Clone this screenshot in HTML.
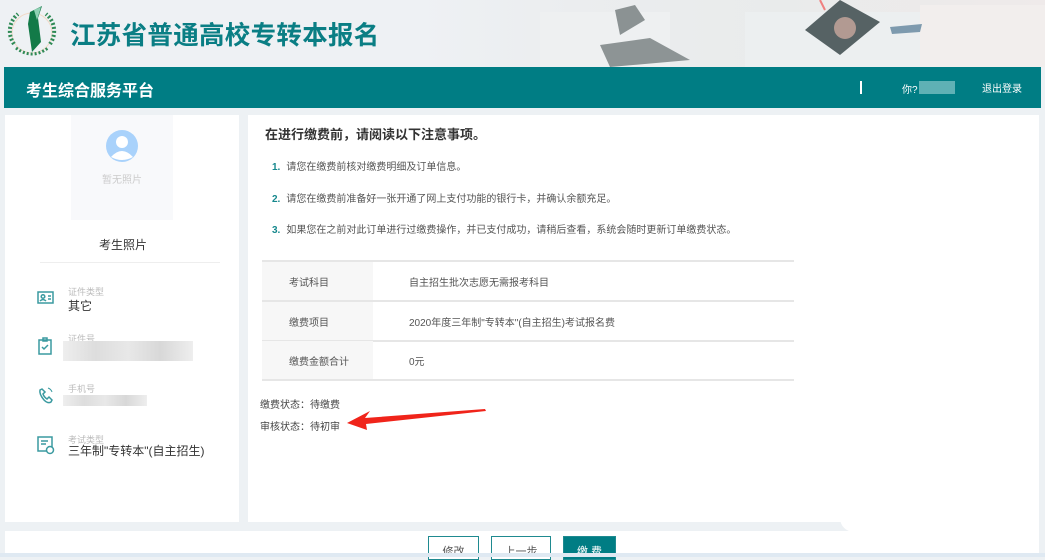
<!DOCTYPE html>
<html><head><meta charset="utf-8"><style>
*{margin:0;padding:0;box-sizing:border-box}
body{width:1045px;height:557px;overflow:hidden;background:#edf1f4;font-family:"Liberation Sans","Noto Sans CJK SC",sans-serif;position:relative;color:#333}
.hdr{position:absolute;left:0;top:0;width:1045px;height:67px;background:linear-gradient(90deg,#eef1f4 0%,#eef1f4 40%,#ebedef 55%,#e9ebeb 75%,#efeaea 100%)}
.title{position:absolute;left:70px;top:15px;font-size:25.5px;font-weight:bold;color:#0a7e84;letter-spacing:0.3px}
.bar{position:absolute;left:4px;top:67px;width:1037px;height:41px;background:#007d84}
.bar .t{position:absolute;left:22px;top:10px;color:#fff;font-size:16px;font-weight:bold}
.abs{position:absolute}
.card{position:absolute;background:#fff}
.lbl{position:absolute;font-size:9px;color:#bbb}
.val{position:absolute;font-size:12px;color:#333}
.blur{position:absolute;background:linear-gradient(90deg,#eee,#ddd,#e8e8e8,#d8d8d8,#eee)}
.note{position:absolute;left:272px;font-size:10px;color:#555}
.note b{color:#16888d;margin-right:6px}
.row{position:absolute;left:262px;width:532px;height:40px;border-bottom:2px solid #e6e6e6;font-size:10px;color:#555}
.row .k{position:absolute;left:0;top:0;width:111px;height:38px;background:#f7f7f7;padding:12px 0 0 27px}
.row .v{position:absolute;left:147px;top:12px}
.btn{position:absolute;top:536px;height:24px;border:1px solid #1f8a90;background:#fff;font-size:11px;color:#555;text-align:center;padding-top:6px}
</style></head><body>
<div class="hdr">
<svg class="abs" style="left:520px;top:0" width="525" height="67" viewBox="0 0 525 67">
<rect x="20" y="12" width="130" height="55" fill="#eef0f1"/>
<rect x="225" y="12" width="180" height="55" fill="#eceff0"/>
<rect x="400" y="5" width="125" height="62" fill="#f2eeed"/>
<polygon points="285,30 320,0 360,22 320,55" fill="#566264"/>
<circle cx="325" cy="28" r="11" fill="#b29a92"/>
<polygon points="95,10 115,5 125,20 100,35" fill="#8b9293"/>
<polygon points="80,45 130,38 170,60 90,67" fill="#8d9495"/>
<polygon points="370,27 402,24 400,32 372,34" fill="#7d9aae"/>
<line x1="300" y1="0" x2="305" y2="10" stroke="#f08080" stroke-width="2"/>
</svg>
<svg class="abs" style="left:6px;top:4px" width="52" height="54" viewBox="0 0 52 54">
<circle cx="26" cy="29" r="20" fill="none" stroke="#f1d9c6" stroke-width="1"/>
<path d="M8 40 A22 22 0 0 1 12 10" fill="none" stroke="#2f8a55" stroke-width="4" stroke-dasharray="2 2"/>
<path d="M44 40 A22 22 0 0 0 40 10" fill="none" stroke="#2f8a55" stroke-width="4" stroke-dasharray="2 2"/>
<path d="M10 44 Q26 56 42 44" fill="none" stroke="#2f8a55" stroke-width="3" stroke-dasharray="2 2"/>
<polygon points="24,8 36,2 32,14 35,38 26,48 22,20" fill="#137a48"/>
<polygon points="28,6 35,3 31,16" fill="#8fd1b4"/>
</svg>
<div class="title">江苏省普通高校专转本报名</div>
</div>
<div class="bar"><div class="t">考生综合服务平台</div>
<div class="abs" style="left:856px;top:14px;width:2px;height:13px;background:#fff"></div>
<div class="abs" style="left:898px;top:14px;color:#fff;font-size:10px">你?</div>
<div class="abs" style="left:915px;top:14px;width:36px;height:13px;background:#5fb1b5"></div>
<div class="abs" style="left:978px;top:13px;color:#fff;font-size:10px">退出登录</div>
</div>

<div class="card" style="left:5px;top:115px;width:234px;height:407px">
<div class="abs" style="left:66px;top:0;width:102px;height:105px;background:#f8f9fb"></div>
<svg class="abs" style="left:100px;top:14px" width="34" height="34" viewBox="0 0 34 34"><circle cx="17" cy="17" r="16" fill="#a9d2fb"/><circle cx="17" cy="13" r="6" fill="#fff"/><path d="M6 28 Q17 16 28 28 Q17 34 6 28Z" fill="#fff"/></svg>
<div class="abs" style="left:97px;top:56px;font-size:10px;color:#ccc">暂无照片</div>
<div class="abs" style="left:94px;top:121px;font-size:12px;color:#333">考生照片</div>
<div class="abs" style="left:35px;top:147px;width:180px;height:1px;background:#eee"></div>
</div>
<svg class="abs" style="left:36px;top:290px" width="20" height="170" viewBox="0 0 20 170" fill="none" stroke="#3a9aa0" stroke-width="1.5">
<rect x="2" y="2" width="15" height="11"/><circle cx="7" cy="6.5" r="1.8"/><path d="M4 11 Q7 8 10 11 M12 6h3M12 9h3"/>
<rect x="3" y="50" width="12" height="14"/><path d="M7 48h4v3h-4z M6 57l2 2 4-4"/>
<path d="M4 100 Q3 104 8 110 Q12 114 15 112 L16 110 L13 107 L11 109 Q8 107 7 104 L9 102 L6 99Z"/><path d="M12 98 Q15 99 16 102" stroke-width="1"/>
<rect x="2" y="147" width="14" height="14"/><circle cx="14" cy="160" r="3.5" fill="#fff"/><path d="M5 151h7M5 154h5"/>
</svg>
<div class="lbl" style="left:68px;top:285px">证件类型</div><div class="val" style="left:68px;top:297px">其它</div>
<div class="lbl" style="left:68px;top:332px">证件号</div><div class="blur" style="left:63px;top:341px;width:130px;height:20px"></div>
<div class="lbl" style="left:68px;top:382px">手机号</div><div class="blur" style="left:63px;top:395px;width:84px;height:11px"></div>
<div class="lbl" style="left:68px;top:433px">考试类型</div><div class="val" style="left:68px;top:442px">三年制"专转本"(自主招生)</div>

<div class="card" style="left:248px;top:115px;width:791px;height:407px"></div>
<div class="abs" style="left:265px;top:124px;font-size:13px;font-weight:bold;color:#333">在进行缴费前，请阅读以下注意事项。</div>
<div class="note" style="top:158px"><b>1.</b>请您在缴费前核对缴费明细及订单信息。</div>
<div class="note" style="top:190px"><b>2.</b>请您在缴费前准备好一张开通了网上支付功能的银行卡，并确认余额充足。</div>
<div class="note" style="top:221px"><b>3.</b>如果您在之前对此订单进行过缴费操作，并已支付成功，请稍后查看，系统会随时更新订单缴费状态。</div>
<div class="abs" style="left:262px;top:260px;width:532px;height:2px;background:#e6e6e6"></div>
<div class="row" style="top:262px"><div class="k">考试科目</div><div class="v">自主招生批次志愿无需报考科目</div></div>
<div class="row" style="top:302px"><div class="k">缴费项目</div><div class="v">2020年度三年制"专转本"(自主招生)考试报名费</div></div>
<div class="row" style="top:341px"><div class="k">缴费金额合计</div><div class="v">0元</div></div>
<div class="abs" style="left:260px;top:396px;font-size:10px;color:#444">缴费状态：待缴费</div>
<div class="abs" style="left:260px;top:418px;font-size:10px;color:#444">审核状态：待初审</div>
<svg class="abs" style="left:345px;top:408px" width="145" height="22" viewBox="0 0 145 22"><polygon points="2,15 25,3 20,10 140,1 141,3 21,16 22,22" fill="#f0241a"/></svg>

<div class="abs" style="left:840px;top:490px;width:199px;height:42px;background:#fff;border-radius:0 0 0 14px"></div>
<div class="abs" style="left:5px;top:531px;width:1034px;height:26px;background:#fff"></div>
<div class="btn" style="left:428px;width:51px">修改</div>
<div class="btn" style="left:491px;width:60px">上一步</div>
<div class="btn" style="left:563px;width:53px;background:#007d84;color:#fff">缴 费</div>
<div class="abs" style="left:0;top:553px;width:1045px;height:4px;background:#dfe9f2"></div>
</body></html>
